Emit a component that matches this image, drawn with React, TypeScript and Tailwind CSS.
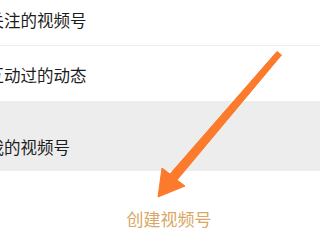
import React from 'react'

const rows = [
  { label: '关注的视频号', cls: 'h-[46px] pb-[6px] border-b border-[#ececec]' },
  { label: '互动过的动态', cls: 'h-[55px] pt-[2px]' },
]

export default function App() {
  return (
    <div
      className="relative w-[320px] h-[240px] overflow-hidden bg-white"
      style={{ fontFamily: '"Noto Sans CJK SC", "Noto Sans", sans-serif' }}
    >
      {rows.map((r) => (
        <div key={r.label} className={`flex items-center ${r.cls}`}>
          <span className="ml-[-12.5px] text-[16.5px] leading-6 text-[#1c1c1c]">{r.label}</span>
        </div>
      ))}

      {/* highlighted row */}
      <div className="h-[70px] bg-[#ededed] pt-[22px] flex items-center">
        <span className="ml-[-12.5px] text-[16.5px] leading-6 text-[#1c1c1c]">我的视频号</span>
      </div>

      <div className="h-[68px] pt-[36px] flex justify-center pl-[18px]">
        <span className="text-[17px] leading-6 text-[#d9a766]">创建视频号</span>
      </div>

      {/* annotation arrow */}
      <svg className="absolute inset-0 pointer-events-none" width="320" height="240" viewBox="0 0 320 240">
        <polygon
          points="277,51.5 281.5,55 177,180 185,186 158,197 162,168 170,174"
          fill="#fb7a2b"
          stroke="#fb7a2b"
          strokeWidth="1"
          strokeLinejoin="round"
        />
      </svg>
    </div>
  )
}
